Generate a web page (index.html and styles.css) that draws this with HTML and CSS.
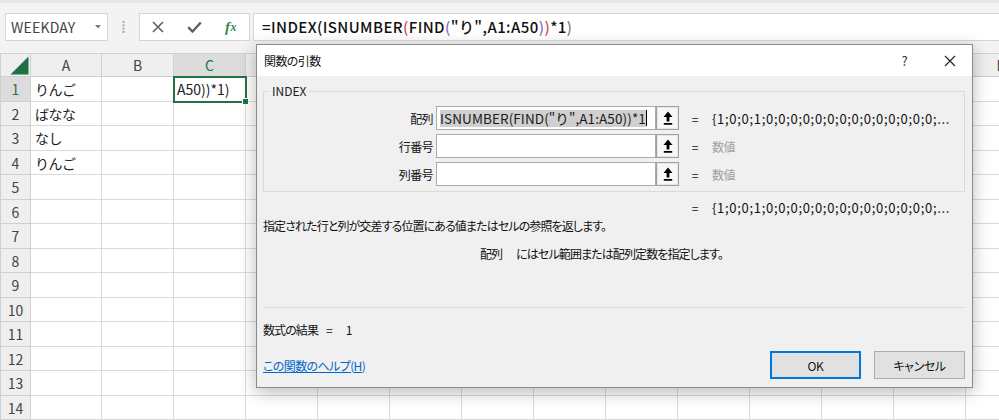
FILE: index.html
```html
<!DOCTYPE html>
<html lang="ja">
<head>
<meta charset="utf-8">
<title>関数の引数</title>
<link rel="stylesheet" href="styles.css">
</head>
<body>
<div class="toolbar">
  <div class="namebox">
    <span>WEEKDAY</span>
    <svg class="caret" width="6" height="4" viewBox="0 0 6 4"><path d="M0 0h6L3 3.5z" fill="#7a7a7a"/></svg>
  </div>
  <div class="grip">
    <svg width="3" height="12" viewBox="0 0 3 12"><g fill="#a8a8a8"><rect x="0.5" y="0" width="2" height="2"/><rect x="0.5" y="3.3" width="2" height="2"/><rect x="0.5" y="6.6" width="2" height="2"/><rect x="0.5" y="9.9" width="2" height="2"/></g></svg>
  </div>
  <div class="fxbox">
    <span class="fxbtn"><svg width="12" height="12" viewBox="0 0 12 12"><path d="M1 1l10 10M11 1L1 11" stroke="#5f5f5f" stroke-width="1.6" fill="none"/></svg></span>
    <span class="fxbtn"><svg width="15" height="12" viewBox="0 0 15 12"><path d="M1.2 6.2l4.3 4.3L13.8 1.5" stroke="#5f5f5f" stroke-width="2.4" fill="none"/></svg></span>
    <span class="fxbtn fx"><i>f</i><i class="x">x</i></span>
  </div>
  <div class="formula">=INDEX(ISNUMBER<span class="p2">(</span>FIND<span class="p3">(</span>"り",A1:A50<span class="p3">)</span><span class="p2">)</span>*1<span class="p1">)</span></div>
</div>

<table class="grid">
  <colgroup>
    <col class="w-hdr"><col class="w-a"><col span="13" class="w-std">
  </colgroup>
  <thead>
    <tr>
      <th class="corner"><svg width="30" height="22" viewBox="0 0 30 22"><path d="M27.5 2.5V20.5H9.5z" fill="#1e7145"/></svg></th>
      <th>A</th><th>B</th><th class="sel">C</th><th>D</th><th>E</th><th>F</th><th>G</th><th>H</th><th>I</th><th>J</th><th>K</th><th>L</th><th>M</th><th>N</th>
    </tr>
  </thead>
  <tbody>
    <tr><th class="sel">1</th><td>りんご</td><td></td><td class="active">A50))*1)</td><td></td><td></td><td></td><td></td><td></td><td></td><td></td><td></td><td></td><td></td><td></td></tr>
    <tr><th>2</th><td>ばなな</td><td></td><td></td><td></td><td></td><td></td><td></td><td></td><td></td><td></td><td></td><td></td><td></td><td></td></tr>
    <tr><th>3</th><td>なし</td><td></td><td></td><td></td><td></td><td></td><td></td><td></td><td></td><td></td><td></td><td></td><td></td><td></td></tr>
    <tr><th>4</th><td>りんご</td><td></td><td></td><td></td><td></td><td></td><td></td><td></td><td></td><td></td><td></td><td></td><td></td><td></td></tr>
    <tr><th>5</th><td></td><td></td><td></td><td></td><td></td><td></td><td></td><td></td><td></td><td></td><td></td><td></td><td></td><td></td></tr>
    <tr><th>6</th><td></td><td></td><td></td><td></td><td></td><td></td><td></td><td></td><td></td><td></td><td></td><td></td><td></td><td></td></tr>
    <tr><th>7</th><td></td><td></td><td></td><td></td><td></td><td></td><td></td><td></td><td></td><td></td><td></td><td></td><td></td><td></td></tr>
    <tr><th>8</th><td></td><td></td><td></td><td></td><td></td><td></td><td></td><td></td><td></td><td></td><td></td><td></td><td></td><td></td></tr>
    <tr><th>9</th><td></td><td></td><td></td><td></td><td></td><td></td><td></td><td></td><td></td><td></td><td></td><td></td><td></td><td></td></tr>
    <tr><th>10</th><td></td><td></td><td></td><td></td><td></td><td></td><td></td><td></td><td></td><td></td><td></td><td></td><td></td><td></td></tr>
    <tr><th>11</th><td></td><td></td><td></td><td></td><td></td><td></td><td></td><td></td><td></td><td></td><td></td><td></td><td></td><td></td></tr>
    <tr><th>12</th><td></td><td></td><td></td><td></td><td></td><td></td><td></td><td></td><td></td><td></td><td></td><td></td><td></td><td></td></tr>
    <tr><th>13</th><td></td><td></td><td></td><td></td><td></td><td></td><td></td><td></td><td></td><td></td><td></td><td></td><td></td><td></td></tr>
    <tr><th>14</th><td></td><td></td><td></td><td></td><td></td><td></td><td></td><td></td><td></td><td></td><td></td><td></td><td></td><td></td></tr>
  </tbody>
</table>

<div class="dialog" role="dialog">
  <div class="titlebar">
    <span class="title">関数の引数</span>
    <span class="capbtn">?</span>
    <span class="capbtn"><svg width="12" height="12" viewBox="0 0 12 12"><path d="M1 1l10 10M11 1L1 11" stroke="#222" stroke-width="1.1" fill="none"/></svg></span>
  </div>
  <div class="dlgbody">
    <fieldset class="group">
      <legend>INDEX</legend>
      <div class="arg">
        <label>配列</label>
        <div class="input"><span class="selected">ISNUMBER(FIND("り",A1:A50))*1</span><span class="caretbar"></span></div>
        <span class="refbtn"><svg width="10" height="14" viewBox="0 0 10 14"><path d="M5 0.5L9.5 6H6.4V10.5H3.6V6H0.5z M0.8 12h8.4v1.8H0.8z" fill="#000"/></svg></span>
        <span class="eq">=</span>
        <span class="val">{1;0;0;1;0;0;0;0;0;0;0;0;0;0;0;0;0;0;...</span>
      </div>
      <div class="arg">
        <label>行番号</label>
        <div class="input"></div>
        <span class="refbtn"><svg width="10" height="14" viewBox="0 0 10 14"><path d="M5 0.5L9.5 6H6.4V10.5H3.6V6H0.5z M0.8 12h8.4v1.8H0.8z" fill="#000"/></svg></span>
        <span class="eq">=</span>
        <span class="val hint">数値</span>
      </div>
      <div class="arg">
        <label>列番号</label>
        <div class="input"></div>
        <span class="refbtn"><svg width="10" height="14" viewBox="0 0 10 14"><path d="M5 0.5L9.5 6H6.4V10.5H3.6V6H0.5z M0.8 12h8.4v1.8H0.8z" fill="#000"/></svg></span>
        <span class="eq">=</span>
        <span class="val hint">数値</span>
      </div>
    </fieldset>
    <div class="result-row">
      <span class="eq">=</span>
      <span class="val">{1;0;0;1;0;0;0;0;0;0;0;0;0;0;0;0;0;0;...</span>
    </div>
    <p class="desc">指定された行と列が交差する位置にある値またはセルの参照を返します。</p>
    <p class="arghelp"><span class="argname">配列</span>にはセル範囲または配列定数を指定します。</p>
    <hr class="sep">
    <p class="formula-result">数式の結果<span class="eqsign">=</span><span class="num">1</span></p>
    <div class="footer">
      <a class="help" href="#">この関数のヘルプ(H)</a>
      <span class="btns">
        <button class="btn primary">OK</button>
        <button class="btn">キャンセル</button>
      </span>
    </div>
  </div>
</div>
</body>
</html>
```

FILE: styles.css
```css
* { box-sizing: border-box; }

html, body {
  margin: 0;
}

body {
  width: 999px;
  height: 420px;
  overflow: hidden;
  position: relative;
  background: #fff;
  font-family: "Noto Sans CJK JP", "Noto Sans", sans-serif;
  color: #222;
}

/* ---------- formula bar ---------- */
.toolbar {
  height: 53px;
  background: #f3f3f3;
  border-top: 3px solid #e6e6e6;
  display: flex;
  align-items: flex-start;
  padding: 10px 0 0 5px;
}

.namebox {
  width: 103px;
  height: 28px;
  background: #fff;
  border: 1px solid #d6d6d6;
  display: flex;
  align-items: center;
  justify-content: space-between;
  padding: 0 6px 0 5px;
  font-size: 14px;
  color: #444;
  letter-spacing: 0.2px;
}

.grip {
  width: 31px;
  height: 28px;
  display: flex;
  align-items: center;
  justify-content: center;
}

.fxbox {
  width: 111px;
  height: 28px;
  background: #fff;
  border: 1px solid #d6d6d6;
  display: flex;
  align-items: center;
}

.fxbtn {
  width: 37px;
  display: flex;
  align-items: center;
  justify-content: center;
}

.fx {
  font-family: "Liberation Serif", serif;
  font-style: italic;
  font-weight: bold;
  color: #2f8a55;
  font-size: 15px;
}
.fx i { font-style: italic; }
.fx .x { font-size: 12px; margin-left: 0.5px; }

.formula {
  flex: 1;
  margin-left: 3px;
  height: 28px;
  background: #fff;
  border: 1px solid #d6d6d6;
  border-right: none;
  padding-left: 8px;
  font-size: 15px;
  font-weight: 500;
  line-height: 26px;
  letter-spacing: 0.4px;
  color: #111;
  white-space: nowrap;
}
.p1 { color: #666; font-weight: 400; }
.p2 { color: #d0504a; }
.p3 { color: #8a6fb8; }

/* ---------- worksheet ---------- */
.grid {
  border-collapse: collapse;
  table-layout: fixed;
  width: 1037px;
  font-size: 14px;
}
.w-hdr { width: 30px; }
.w-a { width: 71px; }
.w-std { width: 72px; }

.grid th {
  background: #efefef;
  border: 1px solid #d0d0d0;
  font-weight: 400;
  color: #444;
  padding: 0;
  text-align: center;
}
.grid thead th { height: 22px; }
.grid thead th.corner { padding: 0; line-height: 0; }
.grid th.sel { background: #dcdcdc; color: #217346; }

.grid td {
  border: 1px solid #dadada;
  padding: 0 4px;
  white-space: nowrap;
  overflow: hidden;
  color: #222;
  letter-spacing: -0.5px;
}
.grid tbody tr:nth-child(odd) { height: 25px; }
.grid tbody tr:nth-child(even) { height: 24px; }

.grid td.active {
  position: relative;
  overflow: visible;
  outline: 2px solid #217346;
  outline-offset: -1px;
  letter-spacing: 0;
  padding-left: 3px;
}
.grid td.active::after {
  content: "";
  position: absolute;
  right: -4px;
  bottom: -4px;
  width: 5px;
  height: 5px;
  background: #217346;
  border: 1px solid #fff;
}

/* ---------- function arguments dialog ---------- */
.dialog {
  position: absolute;
  left: 256px;
  top: 44px;
  width: 717px;
  height: 344px;
  background: #f0f0f0;
  border: 1px solid #8a8a8a;
  box-shadow: 0 4px 16px rgba(0, 0, 0, 0.28);
  font-size: 12px;
  color: #111;
  font-feature-settings: "palt";
}

.titlebar {
  height: 31px;
  background: #fff;
  display: flex;
  align-items: center;
  padding-left: 7px;
}
.title { flex: 1; letter-spacing: -0.6px; }
.capbtn {
  width: 45px;
  height: 31px;
  display: flex;
  align-items: center;
  justify-content: center;
  font-size: 13px;
  color: #333;
}

.dlgbody {
  padding: 0 7px 0 6px;
}

.group {
  margin: 7px 0 0;
  padding: 7px 0 5px;
  border: 1px solid #dadada;
  min-width: 0;
  display: flex;
  flex-direction: column;
  gap: 4px;
}
.group legend {
  margin-left: 5px;
  padding: 0 3px;
  font-size: 12px;
  line-height: 16px;
  color: #222;
}

.arg {
  display: flex;
  align-items: center;
  height: 24px;
}
.arg label {
  width: 170px;
  text-align: right;
  padding-right: 1px;
  letter-spacing: -0.6px;
}
.input {
  width: 220px;
  height: 24px;
  margin-left: 2px;
  background: #fff;
  border: 1px solid #ababab;
  display: flex;
  align-items: center;
  padding-left: 3px;
  overflow: hidden;
  white-space: nowrap;
  font-feature-settings: normal;
}
.selected {
  background: #cfcfcf;
  font-size: 13.5px;
  line-height: 17px;
  letter-spacing: 0.1px;
  color: #1a1a1a;
}
.caretbar {
  width: 1px;
  height: 16px;
  background: #000;
}
.refbtn {
  width: 23px;
  height: 24px;
  background: #f7f7f7;
  border: 1px solid #a0a0a0;
  box-shadow: inset 0 0 0 1px #e6e6e6;
  display: flex;
  align-items: center;
  justify-content: center;
}
.eq {
  width: 32px;
  text-align: center;
  font-size: 12px;
}
.val {
  padding-left: 1px;
  white-space: nowrap;
  font-size: 13px;
  letter-spacing: 0.7px;
  font-feature-settings: normal;
}
.val.hint {
  color: #a0a0a0;
  font-size: 12px;
  letter-spacing: -0.4px;
  font-feature-settings: "palt";
}

.result-row {
  display: flex;
  align-items: center;
  height: 20px;
  margin-top: 5px;
  padding-left: 416px;
}

.desc,
.arghelp,
.formula-result {
  margin: 0;
  line-height: 18px;
  letter-spacing: -0.9px;
}
.arghelp {
  margin-top: 10px;
  padding-left: 217px;
}
.argname { margin-right: 14px; }

.sep {
  margin: 44px 0 0;
  border: none;
  border-top: 1px solid #d9d9d9;
  height: 0;
}

.formula-result { margin-top: 13px; }
.formula-result .eqsign { margin-left: 8px; }
.formula-result .num { margin-left: 14px; }

.footer {
  margin-top: 12px;
  display: flex;
  align-items: center;
  justify-content: space-between;
}
.help {
  color: #0066cc;
  text-decoration: underline;
  letter-spacing: -0.6px;
}
.btns {
  display: flex;
  gap: 13px;
}
.btn {
  width: 91px;
  height: 28px;
  background: #e1e1e1;
  border: 1px solid #adadad;
  font-family: inherit;
  font-size: 12px;
  color: #111;
  padding: 0;
  font-feature-settings: "palt";
  letter-spacing: -0.4px;
}
.btn.primary {
  border: 2px solid #0078d7;
}
```
